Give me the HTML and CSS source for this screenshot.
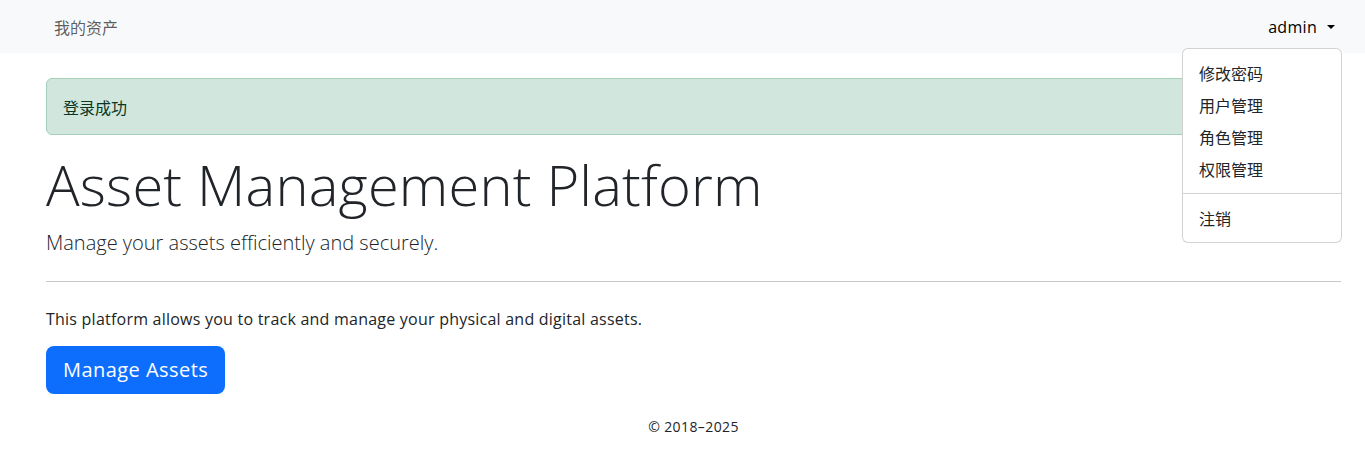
FILE: index.html
```html
<!DOCTYPE html>
<html lang="zh">
<head>
<meta charset="utf-8">
<title>Asset Management Platform</title>
<link rel="stylesheet" href="styles.css">
</head>
<body>
<nav class="navbar">
  <div class="navbar-inner">
    <a class="brand" href="#">我的资产</a>
    <div class="user">
      <a class="user-toggle" href="#">admin<span class="caret"></span></a>
      <ul class="dropdown">
        <li><a href="#">修改密码</a></li>
        <li><a href="#">用户管理</a></li>
        <li><a href="#">角色管理</a></li>
        <li><a href="#">权限管理</a></li>
        <li class="divider"></li>
        <li><a href="#">注销</a></li>
      </ul>
    </div>
  </div>
</nav>
<main class="container">
  <div class="alert">登录成功</div>
  <h1 class="display">Asset Management Platform</h1>
  <p class="lead">Manage your assets efficiently and securely.</p>
  <hr class="rule">
  <p class="text">This platform allows you to track and manage your physical and digital assets.</p>
  <a class="btn" href="#">Manage Assets</a>
  <footer class="footer">© 2018–2025</footer>
</main>
</body>
</html>
```
FILE: styles.css
```css
* { box-sizing: border-box; }
html, body { margin: 0; padding: 0; }
body {
  font-family: "Open Sans", "Noto Sans CJK SC", sans-serif;
  font-size: 16px;
  line-height: 1.5;
  color: #212529;
  background: #fff;
}
a { text-decoration: none; }
.navbar {
  background: #f8f9fa;
  height: 53px;
}
.navbar-inner {
  display: flex;
  align-items: center;
  justify-content: space-between;
  height: 53px;
  padding: 0 23px 0 54px;
}
.brand {
  font-family: "Noto Sans CJK SC", sans-serif;
  font-size: 16px;
  color: rgba(0,0,0,.65);
}
.user { position: relative; }
.user-toggle {
  display: flex;
  align-items: center;
  color: #000;
  font-size: 16px;
  letter-spacing: 0.3px;
  padding-right: 7px;
}
.caret {
  display: inline-block;
  margin-left: 10px;
  width: 0; height: 0;
  border-left: 4px solid transparent;
  border-right: 4px solid transparent;
  border-top: 4px solid #000;
}
.dropdown {
  position: absolute;
  right: 0;
  top: 33px;
  width: 160px;
  margin: 0;
  padding: 8px 0;
  list-style: none;
  background: #fff;
  border: 1px solid rgba(0,0,0,.176);
  border-radius: 6px;
  z-index: 10;
}
.dropdown a {
  display: block;
  padding: 0 16px;
  height: 32px;
  line-height: 32px;
  font-family: "Noto Sans CJK SC", sans-serif;
  font-size: 16px;
  color: #212529;
}
.dropdown .divider {
  height: 0;
  border-top: 1px solid rgba(0,0,0,.176);
  margin: 8px 0;
}
.container {
  padding: 25px 24px 0 46px;
}
.alert {
  height: 57px;
  display: flex;
  align-items: center;
  padding: 0 16px;
  background: #d1e7dd;
  border: 1px solid #a3cfbb;
  border-radius: 6px;
  color: #0a3622;
  font-family: "Noto Sans CJK SC", sans-serif;
  font-size: 16px;
  margin-bottom: 16px;
}
.display {
  margin: 0 0 10px;
  font-size: 56px;
  font-weight: 300;
  line-height: 1.2;
  letter-spacing: 0.2px;
}
.lead {
  margin: 0 0 23px;
  font-size: 20px;
  font-weight: 300;
  line-height: 1.5;
}
.rule {
  margin: 0 0 25px;
  border: 0;
  border-top: 1px solid #c8c8c8;
}
.text {
  margin: 0 0 15px;
  font-size: 16px;
  letter-spacing: 0.23px;
}
.btn {
  display: inline-block;
  background: #0d6efd;
  color: #fff;
  font-size: 20px;
  line-height: 30px;
  padding: 9px 17px;
  letter-spacing: 0.45px;
  border-radius: 8px;
}
.footer {
  text-align: center;
  font-size: 14px;
  letter-spacing: 0.4px;
  margin-top: 22px;
}
```
